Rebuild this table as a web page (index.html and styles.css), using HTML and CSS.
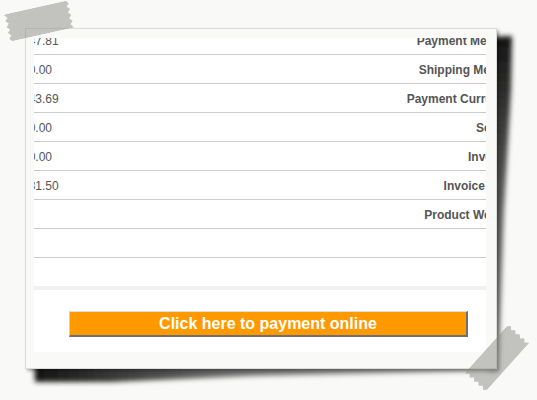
FILE: index.html
```html
<!DOCTYPE html>
<html lang="en">
<head>
    <meta charset="UTF-8">
    <meta name="viewport" content="width=device-width, initial-scale=1.0">
    <title>Order summary</title>
    <link rel="stylesheet" href="styles.css">
</head>
<body>
    <div class="stage">
        <!-- curled paper shadow -->
        <svg class="shadow" width="537" height="400" viewBox="0 0 537 400">
            <defs>
                <filter id="soft" x="-20%" y="-20%" width="140%" height="140%">
                    <feGaussianBlur stdDeviation="2.5"/>
                </filter>
                <linearGradient id="fadeDown" x1="0" y1="0" x2="0" y2="1">
                    <stop offset="0" stop-color="#151515"/>
                    <stop offset="0.45" stop-color="#555"/>
                    <stop offset="1" stop-color="#999"/>
                </linearGradient>
                <linearGradient id="fadeRight" x1="0" y1="0" x2="1" y2="0">
                    <stop offset="0" stop-color="#151515"/>
                    <stop offset="0.4" stop-color="#666"/>
                    <stop offset="1" stop-color="#aaa"/>
                </linearGradient>
            </defs>
            <polygon points="488,37 512,36 511,90 504,210 499,372 488,372" fill="url(#fadeDown)" filter="url(#soft)"/>
            <polygon points="34,358 35,382 110,382 250,376 460,372 495,371 495,358" fill="url(#fadeRight)" filter="url(#soft)"/>
        </svg>

        <div class="card">
            <div class="panel">
                <div class="rows">
                    <div class="row"><span class="value">147.81</span><span class="label">Payment Method :</span></div>
                    <div class="row"><span class="value">10.00</span><span class="label">Shipping Method:</span></div>
                    <div class="row"><span class="value">143.69</span><span class="label">Payment Currency :</span></div>
                    <div class="row"><span class="value">10.00</span><span class="label">Scores:</span></div>
                    <div class="row"><span class="value">10.00</span><span class="label">Invoices:</span></div>
                    <div class="row"><span class="value">231.50</span><span class="label">Invoice Total:</span></div>
                    <div class="row"><span class="value"></span><span class="label">Product Weight :</span></div>
                    <div class="row"><span class="value"></span><span class="label"></span></div>
                </div>
                <div class="divider"></div>
                <div class="actions">
                    <button class="pay">Click here to payment online</button>
                </div>
            </div>
        </div>

        <span class="tape tape-top"></span>
        <span class="tape tape-bottom"></span>
    </div>
</body>
</html>
```

FILE: styles.css
```css
body {
    margin: 0;
    background-color: #f9faf7;
    font-family: "Liberation Sans", Arial, sans-serif;
}
.stage {
    position: relative;
    width: 537px;
    height: 400px;
    padding: 28px 0 0 25px;
    box-sizing: border-box;
    overflow: hidden;
}
.shadow {
    position: absolute;
    left: 0;
    top: 0;
    z-index: 0;
}
.card {
    position: relative;
    z-index: 1;
    width: 472px;
    height: 341px;
    box-sizing: border-box;
    padding: 9px 10px 16px 8px;
    background: #f9f9f7;
    border: 1px solid #dcdcd8;
    box-shadow: 2px 2px 3px rgba(0, 0, 0, 0.3);
}
.panel {
    height: 314px;
    background: #fff;
    overflow: hidden;
}
.rows {
    margin: -12px -34px 0 -12px;
}
.row {
    display: flex;
    justify-content: space-between;
    min-height: 14px;
    padding: 8px 0 6px;
    line-height: 14px;
    font-size: 12px;
    color: #555;
    border-bottom: 1px solid #cbcbcb;
}
.label {
    font-weight: bold;
    white-space: nowrap;
}
.divider {
    margin-top: 28px;
    height: 4px;
    background: #f0f0f0;
}
.actions {
    padding: 21px 18px 0 35px;
}
.pay {
    display: block;
    width: 100%;
    height: 26px;
    box-sizing: border-box;
    padding: 0;
    background-color: #ff9900;
    color: #fff;
    font-family: "Liberation Sans", Arial, sans-serif;
    font-size: 16px;
    font-weight: bold;
    line-height: 23px;
    border-style: solid;
    border-width: 1px 2px 2px 1px;
    border-color: #dedede #6f6f6f #6f6f6f #cfcfcf;
    cursor: pointer;
}
.tape {
    position: absolute;
    z-index: 2;
    width: 66px;
    height: 28px;
    background: rgba(140, 140, 135, 0.5);
    clip-path: polygon(3px 0, 63px 0, 66px 3px, 63px 6px, 66px 9px, 63px 12px, 66px 15px, 63px 18px, 66px 21px, 63px 24px, 66px 28px, 3px 28px, 0 25px, 3px 22px, 0 19px, 3px 16px, 0 13px, 3px 10px, 0 7px, 3px 4px, 0 1px);
}
.tape-top {
    left: 6px;
    top: 7px;
    transform: rotate(-12.5deg);
}
.tape-bottom {
    left: 464px;
    top: 344px;
    transform: rotate(-48deg);
}
```
